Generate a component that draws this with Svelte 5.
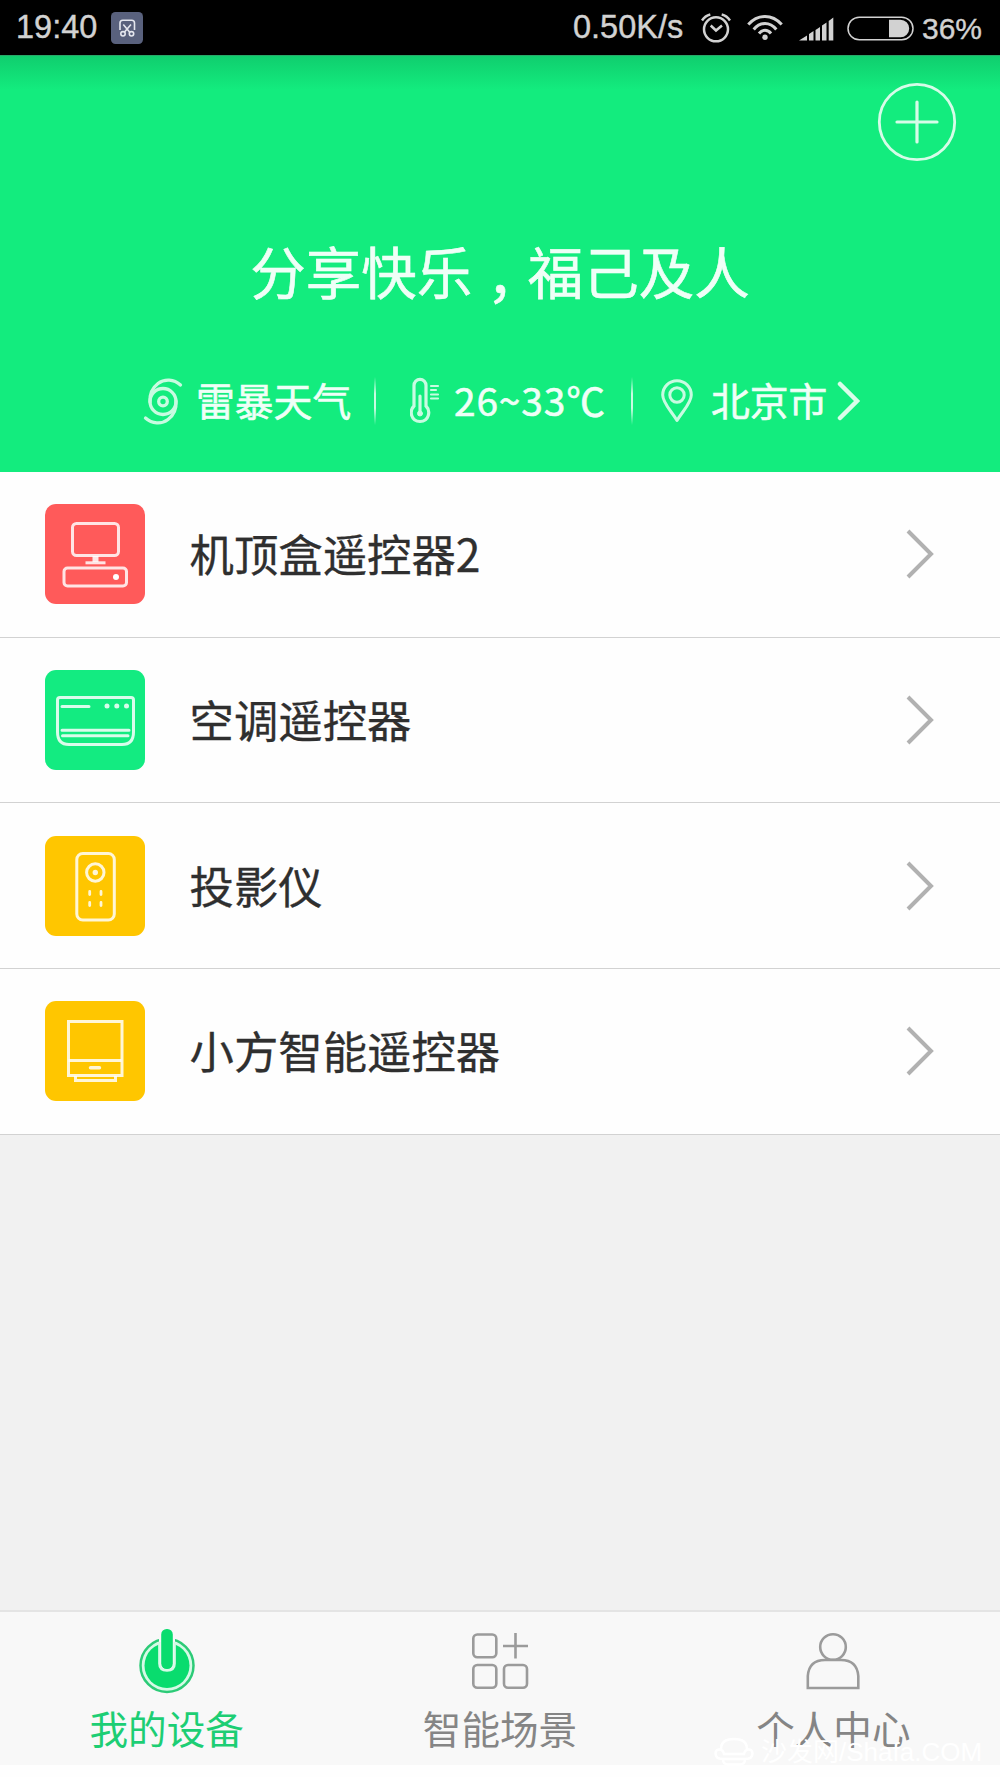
<script lang='ts'>
  type Device = { name: string; icon: string; color: string };

  const devices: Device[] = [
    { name: '机顶盒遥控器2', icon: 'box', color: '#ff5a5a' },
    { name: '空调遥控器', icon: 'air', color: '#13eb81' },
    { name: '投影仪', icon: 'projector', color: '#ffc600' },
    { name: '小方智能遥控器', icon: 'cube', color: '#ffc600' },
  ];

  let active = $state('devices');
</script>

<div class=screen>
  <div class=status>
    <span class=time>19:40</span>
    <svg class=shot width="32" height="32" viewBox="0 0 32 32">
      <rect width="32" height="32" rx="4.5" fill="#59617d" />
      <g fill="none" stroke="#e4e6ee" stroke-width="1.6">
        <path d="M9 18V11Q9 8.200 11.800 8.200H20.700Q23.500 8.200 23.500 11V18" />
        <path d="M12.300 12.500L18.500 20M20 12.500L13.500 20" />
        <circle cx="12" cy="21.800" r="2.200" />
        <circle cx="20.500" cy="21.800" r="2.200" />
      </g>
    </svg>
    <span class=speed>0.50K/s</span>
    <svg class=alarm width="30" height="30" viewBox="0 0 30 30" fill="none" stroke="#d2d2d2" stroke-width="2.500">
      <circle cx="15" cy="16.300" r="12" />
      <path d="M9.700 12.500L15 17.500L21 12.500" />
      <path d="M1 7.500Q4 2.800 9.300 1.500M29 7.500Q26 2.800 20.700 1.500" />
    </svg>
    <svg class=wifi width="36" height="27" viewBox="0 0 36 27" fill="none" stroke="#d2d2d2" stroke-width="3">
      <path d="M1.300 10.500Q8.500 2.500 18 2.500T34.700 10.500" />
      <path d="M6.700 15.500Q11.500 9.500 18 9.500T29.300 15.500" />
      <path d="M12 19.500Q14.500 16.300 18 16.300T24 19.500" />
      <circle cx="18" cy="23.300" r="2.700" fill="#d2d2d2" stroke="none" />
    </svg>
    <svg class=signal width="35" height="24" viewBox="0 0 35 24" fill="#d2d2d2">
      <path d="M0 23.500L8 18.500V23.500ZM10 17L14.500 14V23.500H10ZM16.500 13L21 10V23.500H16.500ZM23 8.500L27.500 5.500V23.500H23ZM29.700 4L34.300 0.500V23.500H29.700Z" />
    </svg>
    <svg class=battery width="68" height="26" viewBox="0 0 68 26">
      <rect x="1" y="1.200" width="65" height="22.600" rx="11.300" fill="none" stroke="#d2d2d2" stroke-width="1.500" />
      <path d="M42 3.800H53.500A8.700 8.700 0 0 1 53.500 21.200H42Z" fill="#d2d2d2" />
    </svg>
    <span class=percent>36%</span>
  </div>

  <header>
    <button class=add aria-label="add">
      <svg width="80" height="80" viewBox="0 0 80 80" fill="none" stroke="#d6fce8" stroke-width="2.800" stroke-linecap="round">
        <circle cx="40" cy="40" r="37.700" />
        <path d="M40 20V60M20 40H60" stroke-width="3.200" />
      </svg>
    </button>
    <h1>分享快乐<span class=comma>，</span>福己及人</h1>
    <div class=weather>
      <svg class=storm width="40" height="48" viewBox="0 0 40 48" fill="none" stroke="#c8fbe1" stroke-width="3.300" stroke-linecap="round">
        <circle cx="20" cy="24.500" r="4.300" />
        <circle cx="20" cy="24.500" r="13" />
        <path d="M37.500 8C31 2 21.500 1.500 15 6.500C8.500 11.500 6.500 18 7 25" />
        <path d="M2.500 41C9 47 18.500 47.500 25 42.500C31.500 37.500 33.500 31 33 24" />
      </svg>
      <span class=sky>雷暴天气</span>
      <i></i>
      <svg class=thermo width="30" height="48" viewBox="0 0 30 48" fill="none" stroke="#c8fbe1" stroke-width="3.200" stroke-linecap="round">
        <path d="M4 29V8.500A6 6.200 0 0 1 16 8.500V29C21 34 19 44.500 10 44.500S-1 34 4 29Z" />
        <path d="M10 19V36" stroke-width="3.200" />
        <circle cx="10" cy="36.500" r="2.500" fill="#c8fbe1" stroke-width="1" />
        <path d="M21 9H28M21 13H26M21 17.500H28M21 21.500H28" stroke-width="2.200" />
      </svg>
      <span class=temp>26~33℃</span>
      <i></i>
      <svg class=pin width="32" height="44" viewBox="0 0 32 44" fill="none" stroke="#c8fbe1" stroke-width="3" stroke-linejoin="round">
        <path d="M16 41.500C10 31.500 1.700 24 1.700 16A14.300 14.300 0 0 1 30.300 16C30.300 24 22 31.500 16 41.500Z" />
        <circle cx="16" cy="16" r="7.200" />
      </svg>
      <span class=city>北京市</span>
      <svg class=more width="24" height="40" viewBox="0 0 24 40" fill="none" stroke="#dafdea" stroke-width="4.500" stroke-linecap="round">
        <path d="M3 3L20 20L3 37" />
      </svg>
    </div>
  </header>

  <main>
    {#each devices as device}
      <div class=row>
        <svg class=tile width="100" height="100" viewBox="0 0 100 100" fill="none" stroke="#fff" stroke-opacity=".84" stroke-width="3">
          <rect width="100" height="100" rx="11" fill={device.color} stroke="none" />
          {#if device.icon === 'box'}
            <rect x="27.500" y="19.500" width="46" height="32" rx="4" />
            <path d="M50.500 52V58" stroke-width="6" />
            <path d="M40.500 58.800H60.500" />
            <rect x="19" y="64" width="62.500" height="18" rx="3.500" />
            <circle cx="71" cy="73" r="3" fill="#fff" stroke="none" />
          {:else if device.icon === 'air'}
            <path d="M15 27.500H86Q88.500 27.500 88.500 30V62Q88.500 74.500 77 74.500H24Q12.500 74.500 12.500 62V30Q12.500 27.500 15 27.500Z" />
            <path d="M17 36.500H44M17 60.300H84M17.500 65.700H83" stroke-linecap="round" />
            <g fill="#fff" fill-opacity=".84" stroke="none">
              <circle cx="62" cy="36" r="2.500" />
              <circle cx="71.800" cy="36" r="2.500" />
              <circle cx="81.500" cy="36" r="2.500" />
            </g>
          {:else if device.icon === 'projector'}
            <rect x="31.800" y="17.500" width="37.500" height="66.500" rx="6" />
            <circle cx="50.300" cy="36.500" r="8.700" />
            <circle cx="50.300" cy="36.500" r="2.700" fill="#fff" fill-opacity=".84" stroke="none" />
            <path d="M44.700 55.500V58.500M56 55.500V58.500M44.700 66.500V69.500M56 66.500V69.500" stroke-width="2.800" stroke-linecap="round" />
          {:else}
            <rect x="23.500" y="20.500" width="53.500" height="54" />
            <path d="M23.500 59.500H76.500M30.500 75V79.500H70.500V75" />
            <path d="M45.500 66.700H54.500" stroke-width="3.400" stroke-linecap="round" />
          {/if}
        </svg>
        <span>{device.name}</span>
        <svg class=arrow width="28" height="50" viewBox="0 0 28 50" fill="none" stroke="#b1b1b1" stroke-width="4">
          <path d="M2 2L25 25L2 48" />
        </svg>
      </div>
    {/each}
  </main>

  <nav>
    <button class:active={active === 'devices'} onclick={() => active = 'devices'}>
      <svg width="66" height="70" viewBox="0 0 66 70">
        <circle cx="33" cy="38.500" r="26.500" fill="#d5fae6" stroke="#2ccb77" stroke-width="2.500" />
        <circle cx="33" cy="38.500" r="22.500" fill="#09dc6e" />
        <path d="M25 8V36Q25 43.500 33 43.500T41 36V8" fill="#f8f8f8" />
        <path d="M25.300 15V36.500Q25.300 43.500 33 43.500T40.700 36.500V15" fill="#f8f8f8" stroke="#d5fae6" stroke-width="2.300" />
        <rect x="27.200" y="2" width="11.600" height="40" rx="5.500" fill="#09dc6e" />
      </svg>
      <span>我的设备</span>
    </button>
    <button class:active={active === 'scenes'} onclick={() => active = 'scenes'}>
      <svg width="66" height="70" viewBox="0 0 66 70" fill="none" stroke="#9b9b9b" stroke-width="2.600">
        <rect x="6.300" y="7.500" width="23" height="22.800" rx="4" />
        <rect x="6.300" y="38" width="23" height="22.800" rx="4" />
        <rect x="37" y="38" width="23" height="22.800" rx="4" />
        <path d="M48.500 6V31.500M36 19H61" />
      </svg>
      <span>智能场景</span>
    </button>
    <button class:active={active === 'me'} onclick={() => active = 'me'}>
      <svg width="66" height="70" viewBox="0 0 66 70" fill="none" stroke="#9b9b9b" stroke-width="2.600">
        <circle cx="33" cy="20" r="12.800" />
        <path d="M7.800 61V49Q9 33 25 33H41Q57 33 58.300 49V61Z" />
      </svg>
      <span>个人中心</span>
    </button>
  </nav>

  <div class=watermark>
    <svg width="40" height="30" viewBox="0 0 40 30" fill="none" stroke="#fff" stroke-width="2.500">
      <path d="M7 12C7 5 12 2 20 2S33 5 33 12M9 22C3 22 1.500 19 1.500 16.500C1.500 11 9 11 10 17H30C31 11 38.500 11 38.500 16.500C38.500 19 37 22 31 22ZM9 22Q9 27.500 14 27.500H26Q31 27.500 31 22" />
    </svg>
    <span>沙发网/Shafa.COM</span>
  </div>
</div>

<style>
  :global(body) {
    margin: 0;
    background: #fff;
  }
  .screen {
    position: relative;
    display: flex;
    flex-direction: column;
    width: 1000px;
    height: 1777px;
    overflow: hidden;
    background: #fefefe;
    font-family: "Noto Sans CJK SC", sans-serif;
  }
  svg {
    display: block;
    flex: none;
  }
  button {
    border: 0;
    padding: 0;
    background: none;
    font: inherit;
  }
  .status {
    display: flex;
    align-items: center;
    height: 55px;
    flex: none;
    box-sizing: border-box;
    padding-left: 16px;
    background: #000;
    color: #d2d2d2;
    font: 32.500px/55px "Liberation Sans", Arial, sans-serif;
    white-space: nowrap;
    -webkit-text-stroke: .4px;
  }
  .time {
    width: 95px;
  }
  .speed {
    width: 111px;
    margin-left: 430px;
  }
  .alarm {
    margin-left: 17px;
  }
  .wifi {
    margin-left: 16px;
  }
  .signal {
    margin: 2px 0 0 16px;
  }
  .battery {
    margin: 2px 0 0 13px;
  }
  .percent {
    margin: 2px 0 0 7px;
    font-size: 30px;
  }

  header {
    display: flex;
    flex-direction: column;
    flex: none;
    box-sizing: border-box;
    height: 417px;
    border-top: 1px solid #27a868;
    background: linear-gradient(#10ce6e, #13ec7e 34px);
    color: #effff7;
    -webkit-text-stroke: .6px;
  }
  .add {
    align-self: flex-end;
    margin: 26px 43px 0 0;
  }
  h1 {
    margin: 68px 0 0;
    font-size: 55.500px;
    line-height: 80px;
    font-weight: 400;
    text-align: center;
  }
  /* centred comma, lowered to the baseline */
  .comma {
    display: inline-block;
    font-family: "Noto Sans CJK TC", sans-serif;
    line-height: 1;
    transform: translateY(20px);
  }
  .weather {
    display: flex;
    align-items: center;
    height: 48px;
    margin: 67px 0 0 143px;
    font-size: 38.800px;
    line-height: 48px;
    white-space: nowrap;
  }
  .weather i {
    width: 2px;
    height: 48px;
    background: linear-gradient(transparent, #c8fbe1 35%, #c8fbe1 65%, transparent);
  }
  .weather span {
    padding-bottom: 4px;
  }
  .sky {
    width: 178px;
    margin-left: 13px;
  }
  .thermo {
    margin-left: 34px;
  }
  .temp {
    width: 177px;
    margin-left: 14px;
    letter-spacing: .9px;
  }
  .pin {
    margin-left: 28px;
  }
  .city {
    margin-left: 18px;
  }
  .more {
    margin-left: 10px;
  }

  .row {
    display: flex;
    align-items: center;
    box-sizing: border-box;
    height: 165.700px;
    padding: 0 66px 0 44.500px;
    border-bottom: 1px solid #d2d2d2;
    background: #fefefe;
    color: #2f2f2f;
    font-size: 44.400px;
  }
  .row span {
    flex: 1;
    margin-left: 45px;
    padding-bottom: 3px;
    -webkit-text-stroke: .3px;
  }

  main {
    flex: 1;
    background: #f1f1f1;
  }
  nav {
    display: flex;
    flex: none;
    box-sizing: border-box;
    height: 155px;
    margin-bottom: 12px;
    border-top: 2px solid #e4e4e4;
    background: #f8f8f8;
  }
  nav button {
    display: flex;
    flex: 1;
    flex-direction: column;
    align-items: center;
    padding-top: 15px;
    color: #858585;
    font-size: 38.600px;
    line-height: 60px;
  }
  nav .active {
    color: #1dce74;
  }

  .watermark {
    position: absolute;
    left: 714px;
    top: 1732px;
    display: flex;
    align-items: center;
    color: #fff;
    font: 26px/40px "Liberation Sans", "Noto Sans CJK SC", sans-serif;
    white-space: nowrap;
  }
  .watermark span {
    margin-left: 7px;
  }
</style>
